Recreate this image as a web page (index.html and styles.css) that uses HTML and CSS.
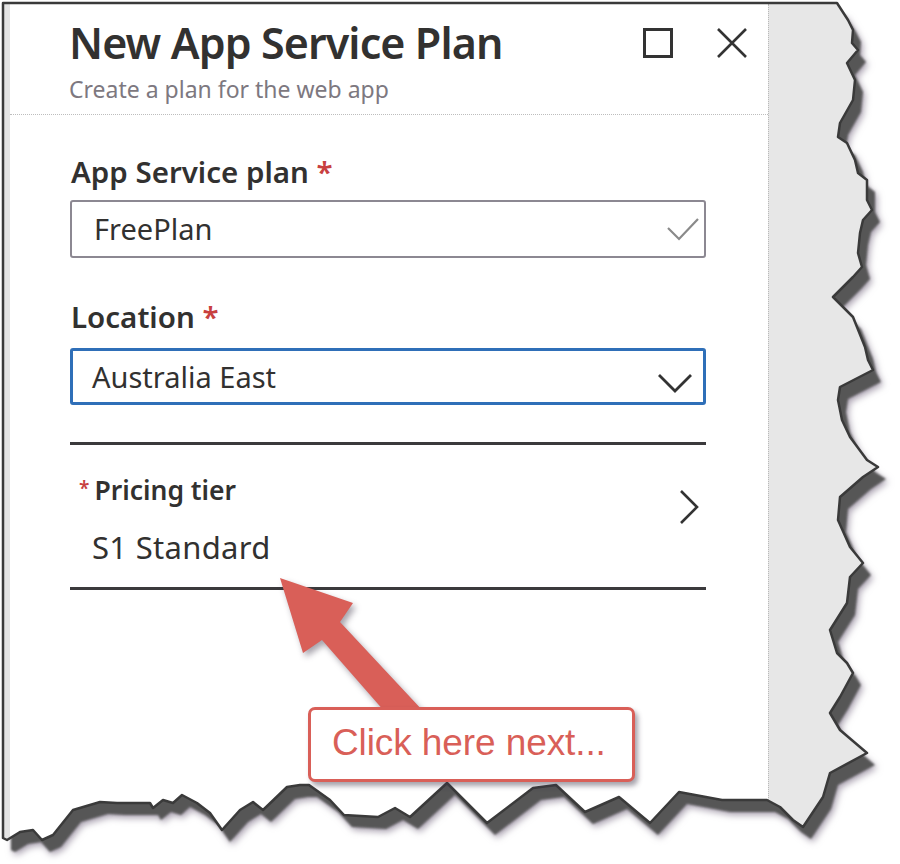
FILE: index.html
```html
<!DOCTYPE html>
<html>
<head>
<meta charset="utf-8">
<title>New App Service Plan</title>
<link rel="stylesheet" href="styles.css">
</head>
<body>
<div class="stage">
  <div class="paper">
    <div class="strip-left"></div>
    <div class="panel">
      <div class="header">
        <div class="titles">
          <h1 class="title">New App Service Plan</h1>
          <p class="subtitle">Create a plan for the web app</p>
        </div>
        <div class="win-icons">
          <svg class="icon" width="30" height="30" viewBox="0 0 30 30"><rect x="1.5" y="1.5" width="27" height="27" fill="none" stroke="#333" stroke-width="3"/></svg>
          <svg class="icon" width="30" height="30" viewBox="0 0 30 30"><path d="M1 1L29 29M29 1L1 29" fill="none" stroke="#333" stroke-width="2.6"/></svg>
        </div>
      </div>
      <div class="form">
        <div class="label">App Service plan <span class="req">*</span></div>
        <div class="input">
          <span class="value">FreePlan</span>
          <svg class="check" width="32" height="54" viewBox="0 0 32 54"><path d="M1 26L12 37L31 17" fill="none" stroke="#8a8a8a" stroke-width="2.2"/></svg>
        </div>
        <div class="label label-loc">Location <span class="req">*</span></div>
        <div class="select">
          <span class="value">Australia East</span>
          <svg class="chev-down" width="34" height="51" viewBox="0 0 34 51"><path d="M1 24L17 40L33 24" fill="none" stroke="#333" stroke-width="2.8"/></svg>
        </div>
        <div class="tier">
          <div class="tier-text">
            <div class="tier-label"><span class="req-pre">*</span>Pricing tier</div>
            <div class="tier-value">S1 Standard</div>
          </div>
          <svg class="chev-right" width="20" height="34" viewBox="0 0 20 34"><path d="M2 1L18 17L2 33" fill="none" stroke="#333" stroke-width="2.6"/></svg>
        </div>
      </div>
    </div>
    <div class="strip-right"></div>
  </div>

  <svg class="torn" width="900" height="864" viewBox="0 0 900 864">
    <defs>
      <clipPath id="outside">
        <path clip-rule="evenodd" d="M0 0H900V864H0Z M3 3 L837 3 L848 20 L853 30 L852 43 L858 50 L847 63 L855 80 L853 100 L840 123 L838 137 L847 143 L855 160 L858 173 L867 180 L867 200 L872 210 L863 220 L860 233 L858 253 L862 267 L853 277 L837 293 L833 297 L843 307 L853 317 L857 327 L865 347 L868 360 L873 370 L840 387 L838 400 L842 420 L850 437 L867 460 L878 467 L863 477 L840 497 L838 520 L850 547 L863 563 L850 577 L847 603 L830 630 L837 653 L847 663 L853 673 L840 697 L830 713 L840 730 L867 753 L830 773 L823 797 L803 827 L793 820 L780 807 L767 800 L722 800 L679 792 L650 823 L619 797 L585 812 L556 785 L533 788 L487 823 L447 783 L410 817 L395 808 L378 817 L344 815 L330 800 L309 785 L300 785 L287 787 L263 810 L253 802 L240 810 L222 830 L210 813 L197 803 L182 795 L173 803 L163 800 L153 808 L150 803 L117 803 L100 802 L73 810 L53 835 L42 840 L33 830 L20 832 L7 840 L3 838 Z"/>
      </clipPath>
      <filter id="blurHalo" x="-10%" y="-10%" width="120%" height="120%"><feGaussianBlur stdDeviation="3.5"/></filter>
      <filter id="blurCore" x="-10%" y="-10%" width="120%" height="120%"><feGaussianBlur stdDeviation="1.2"/></filter>
      <path id="edge" d="M3 3 L837 3 L848 20 L853 30 L852 43 L858 50 L847 63 L855 80 L853 100 L840 123 L838 137 L847 143 L855 160 L858 173 L867 180 L867 200 L872 210 L863 220 L860 233 L858 253 L862 267 L853 277 L837 293 L833 297 L843 307 L853 317 L857 327 L865 347 L868 360 L873 370 L840 387 L838 400 L842 420 L850 437 L867 460 L878 467 L863 477 L840 497 L838 520 L850 547 L863 563 L850 577 L847 603 L830 630 L837 653 L847 663 L853 673 L840 697 L830 713 L840 730 L867 753 L830 773 L823 797 L803 827 L793 820 L780 807 L767 800 L722 800 L679 792 L650 823 L619 797 L585 812 L556 785 L533 788 L487 823 L447 783 L410 817 L395 808 L378 817 L344 815 L330 800 L309 785 L300 785 L287 787 L263 810 L253 802 L240 810 L222 830 L210 813 L197 803 L182 795 L173 803 L163 800 L153 808 L150 803 L117 803 L100 802 L73 810 L53 835 L42 840 L33 830 L20 832 L7 840 L3 838 Z"/>
    </defs>
    <path fill="#fff" fill-rule="evenodd" d="M0 0H900V864H0Z M3 3 L837 3 L848 20 L853 30 L852 43 L858 50 L847 63 L855 80 L853 100 L840 123 L838 137 L847 143 L855 160 L858 173 L867 180 L867 200 L872 210 L863 220 L860 233 L858 253 L862 267 L853 277 L837 293 L833 297 L843 307 L853 317 L857 327 L865 347 L868 360 L873 370 L840 387 L838 400 L842 420 L850 437 L867 460 L878 467 L863 477 L840 497 L838 520 L850 547 L863 563 L850 577 L847 603 L830 630 L837 653 L847 663 L853 673 L840 697 L830 713 L840 730 L867 753 L830 773 L823 797 L803 827 L793 820 L780 807 L767 800 L722 800 L679 792 L650 823 L619 797 L585 812 L556 785 L533 788 L487 823 L447 783 L410 817 L395 808 L378 817 L344 815 L330 800 L309 785 L300 785 L287 787 L263 810 L253 802 L240 810 L222 830 L210 813 L197 803 L182 795 L173 803 L163 800 L153 808 L150 803 L117 803 L100 802 L73 810 L53 835 L42 840 L33 830 L20 832 L7 840 L3 838 Z"/>
    <g clip-path="url(#outside)">
      <use href="#edge" transform="translate(10 15)" fill="#a79fae" filter="url(#blurHalo)"/>
      <use href="#edge" transform="translate(8 12)" fill="#565656" filter="url(#blurCore)"/>
    </g>
    <use href="#edge" fill="none" stroke="#3a3a3a" stroke-width="2.5" stroke-linejoin="round"/>
  </svg>

  <svg class="arrow" width="900" height="864" viewBox="0 0 900 864">
    <polygon points="280,578 353,603 340,622 424,712 385,712 322,640 303,653" fill="#d95f58"/>
  </svg>

  <div class="callout">Click here next...</div>
</div>
</body>
</html>
```

FILE: styles.css
```css
* {
  box-sizing: border-box;
  margin: 0;
  padding: 0;
}

html, body {
  margin: 0;
  background: #fff;
}

body {
  width: 900px;
  height: 864px;
  overflow: hidden;
  font-family: "Noto Sans", "Open Sans", sans-serif;
  color: #323130;
}

.stage {
  position: relative;
  width: 900px;
  height: 864px;
  padding: 4px 0 0 4px;
}

.paper {
  display: flex;
  height: 860px;
}

.strip-left {
  width: 6px;
  background: #e4e4e4;
}

.panel {
  width: 758px;
  background: #fff;
}

.strip-right {
  flex: 1;
  background: #e7e7e7;
  border-left: 1px dotted #b9b9b9;
}

/* header */
.header {
  display: flex;
  justify-content: space-between;
  padding: 13px 21px 12px 59px;
  border-bottom: 1px dotted #bdbdbd;
}

.title {
  font-size: 43px;
  line-height: 52px;
  font-weight: 600;
  letter-spacing: -0.9px;
  color: #323130;
}

.subtitle {
  font-size: 23px;
  line-height: 26px;
  margin-top: 7px;
  color: #7d7880;
}

.win-icons {
  display: flex;
  gap: 44px;
  margin-top: 11px;
}

.icon {
  display: block;
}

/* form */
.form {
  padding: 41px 62px 0 60px;
}

.label {
  font-size: 29.5px;
  line-height: 32px;
  font-weight: 600;
  margin-bottom: 12px;
  padding-left: 1px;
}

.label-loc {
  margin-top: 43px;
  margin-bottom: 15px;
}

.req {
  color: #c8403f;
}

.input {
  height: 58px;
  border: 2px solid #8c8892;
  border-radius: 3px;
  display: flex;
  align-items: center;
  justify-content: space-between;
  padding: 0 5px 0 22px;
  font-size: 29px;
  line-height: 54px;
}

.select {
  height: 57px;
  border: 3px solid #2f6fb8;
  border-radius: 3px;
  display: flex;
  align-items: center;
  justify-content: space-between;
  padding: 0 11px 0 19px;
  font-size: 29px;
  line-height: 51px;
}

.check, .chev-down, .chev-right {
  display: block;
  flex: none;
}

.tier {
  margin-top: 37px;
  border-top: 3px solid #3b3a3c;
  border-bottom: 3px solid #3b3a3c;
  padding: 28px 7px 23px 9px;
  display: flex;
  justify-content: space-between;
  align-items: flex-start;
}

.tier-label {
  font-size: 26.5px;
  line-height: 30px;
  font-weight: 600;
}

.req-pre {
  color: #c8403f;
  font-size: 19px;
  vertical-align: 5px;
  margin-right: 5px;
}

.tier-value {
  margin-top: 25px;
  padding-left: 13px;
  font-size: 31px;
  line-height: 34px;
  letter-spacing: 0.3px;
}

.chev-right {
  margin-top: 17px;
}

/* overlays */
.torn {
  position: absolute;
  left: 0;
  top: 0;
}

.arrow {
  position: absolute;
  left: 0;
  top: 0;
  filter: drop-shadow(3px 4px 3px rgba(60, 50, 70, 0.45));
}

.callout {
  position: absolute;
  left: 308px;
  top: 707px;
  width: 327px;
  height: 75px;
  border: 3px solid #d95f58;
  border-radius: 7px;
  background: #fff;
  box-shadow: 3px 4px 5px rgba(60, 50, 70, 0.45);
  padding: 0 0 4px 21px;
  font-family: "Liberation Sans", Arial, sans-serif;
  font-size: 37px;
  line-height: 65px;
  letter-spacing: -0.1px;
  color: #d95f58;
  white-space: nowrap;
}
```
